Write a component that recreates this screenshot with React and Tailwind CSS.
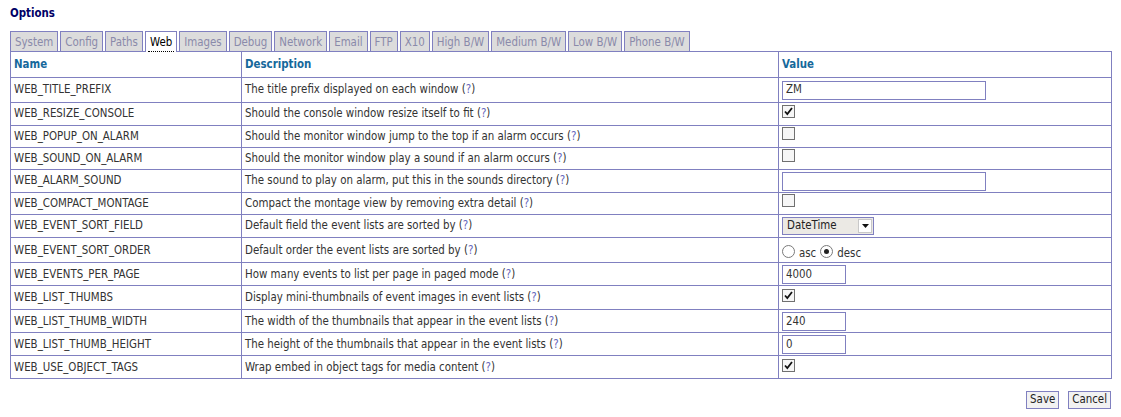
import React from "react";

const tabs = ["System","Config","Paths","Web","Images","Debug","Network","Email","FTP","X10","High B/W","Medium B/W","Low B/W","Phone B/W"];

function Check({ on }) {
  return (
    <span className="inline-flex items-center justify-center w-[13px] h-[13px] border border-[#707070] bg-[#f6f6f6]">
      {on && (
        <svg width="11" height="11" viewBox="0 0 11 11">
          <path d="M2 5.5 L4.3 8 L9 2" fill="none" stroke="#111" strokeWidth="1.8" />
        </svg>
      )}
    </span>
  );
}

function Radio({ on }) {
  return (
    <span className="inline-flex items-center justify-center w-[13px] h-[13px] rounded-full border border-[#7a7a7a] bg-white">
      {on && <span className="w-[5px] h-[5px] rounded-full bg-[#222]" />}
    </span>
  );
}

function TextIn({ value, w }) {
  return (
    <div className={`${w} h-[19px] border border-[#8080c0] bg-white flex items-center px-[3px] text-[#333]`}>{value}</div>
  );
}

const rows = [
  ["WEB_TITLE_PREFIX","The title prefix displayed on each window", "h-[25px]", <TextIn value="ZM" w="w-[204px]" />],
  ["WEB_RESIZE_CONSOLE","Should the console window resize itself to fit", "h-[23px]", <Check on />],
  ["WEB_POPUP_ON_ALARM","Should the monitor window jump to the top if an alarm occurs", "h-[22px]", <Check />],
  ["WEB_SOUND_ON_ALARM","Should the monitor window play a sound if an alarm occurs", "h-[22px]", <Check />],
  ["WEB_ALARM_SOUND","The sound to play on alarm, put this in the sounds directory", "h-[23px]", <TextIn value="" w="w-[204px]" />],
  ["WEB_COMPACT_MONTAGE","Compact the montage view by removing extra detail", "h-[22px]", <Check />],
  ["WEB_EVENT_SORT_FIELD","Default field the event lists are sorted by", "h-[23px]",
    <div className="w-[92px] h-[18px] border border-[#8080c0] bg-[#ebe9e4] flex items-center justify-between pl-[4px] pr-[1px] text-[#222]">
      <span>DateTime</span>
      <span className="w-[14px] h-[14px] bg-white border border-[#c8c8c8] flex items-center justify-center">
        <svg width="7" height="4" viewBox="0 0 7 4"><path d="M0 0 H7 L3.5 4 Z" fill="#111" /></svg>
      </span>
    </div>],
  ["WEB_EVENT_SORT_ORDER","Default order the event lists are sorted by", "h-[25px]",
    <div className="flex items-center pt-[2px]">
      <Radio />
      <span className="ml-[4px] mr-[4px] mt-[5px]">asc</span>
      <Radio on />
      <span className="ml-[4px] mt-[5px]">desc</span>
    </div>],
  ["WEB_EVENTS_PER_PAGE","How many events to list per page in paged mode", "h-[23px]", <TextIn value="4000" w="w-[64px]" />],
  ["WEB_LIST_THUMBS","Display mini-thumbnails of event images in event lists", "h-[24px]", <Check on />],
  ["WEB_LIST_THUMB_WIDTH","The width of the thumbnails that appear in the event lists", "h-[23px]", <TextIn value="240" w="w-[64px]" />],
  ["WEB_LIST_THUMB_HEIGHT","The height of the thumbnails that appear in the event lists", "h-[23px]", <TextIn value="0" w="w-[64px]" />],
  ["WEB_USE_OBJECT_TAGS","Wrap embed in object tags for media content", "h-[23px]", <Check on />],
];

export default function App() {
  return (
    <div className="w-[1121px] h-[417px] bg-white text-[11.4px] text-[#333] font-['Verdana','DejaVu_Sans_Condensed','DejaVu_Sans',sans-serif] px-[10px] pt-[5px]">
      <div className="font-bold text-[#000066] text-[11.4px] h-[26px]">Options</div>
      <div className="flex gap-[2px] h-[20px]">
        {tabs.map((t) => (
          <div
            key={t}
            className={
              t === "Web"
                ? "h-[21px] border border-b-0 border-[#8080c0] bg-white text-black px-[4px] pt-[2px] relative z-10 flex flex-col"
                : "h-[20px] border border-b-0 border-[#8080c0] bg-[#dcdcdc] text-[#8a8aaa] px-[4px] pt-[2px]"
            }
          >
            {t === "Web" ? (
              <>
                <span className="flex-1">{t}</span>
                <span className="h-0 border-b border-dotted border-black -mx-[2px]" />
              </>
            ) : (
              t
            )}
          </div>
        ))}
      </div>
      <table className="w-[1101px] border-collapse border border-[#8080c0] table-fixed">
        <colgroup>
          <col className="w-[231px]" />
          <col className="w-[537px]" />
          <col className="w-[333px]" />
        </colgroup>
        <thead>
          <tr className="h-[26px] text-left text-[#16689b] font-bold">
            <th className="border border-[#8080c0] pl-[3px] font-bold">Name</th>
            <th className="border border-[#8080c0] pl-[3px] font-bold">Description</th>
            <th className="border border-[#8080c0] pl-[3px] font-bold">Value</th>
          </tr>
        </thead>
        <tbody>
          {rows.map(([n, d, h, v]) => (
            <tr key={n} className={h}>
              <td className="border border-[#8080c0] pl-[3px] py-0">{n}</td>
              <td className="border border-[#8080c0] pl-[3px] py-0">
                {d} (<span className="text-[#6666bb]">?</span>)
              </td>
              <td className="border border-[#8080c0] pl-[3px] py-0">{v}</td>
            </tr>
          ))}
        </tbody>
      </table>
      <div className="flex justify-end gap-[9px] mt-[12px]">
        <button className="h-[18px] px-[3px] border border-[#8080c0] bg-[#f2f2f2] text-[#222] leading-none">Save</button>
        <button className="h-[18px] px-[3px] border border-[#8080c0] bg-[#f2f2f2] text-[#222] leading-none">Cancel</button>
      </div>
    </div>
  );
}
